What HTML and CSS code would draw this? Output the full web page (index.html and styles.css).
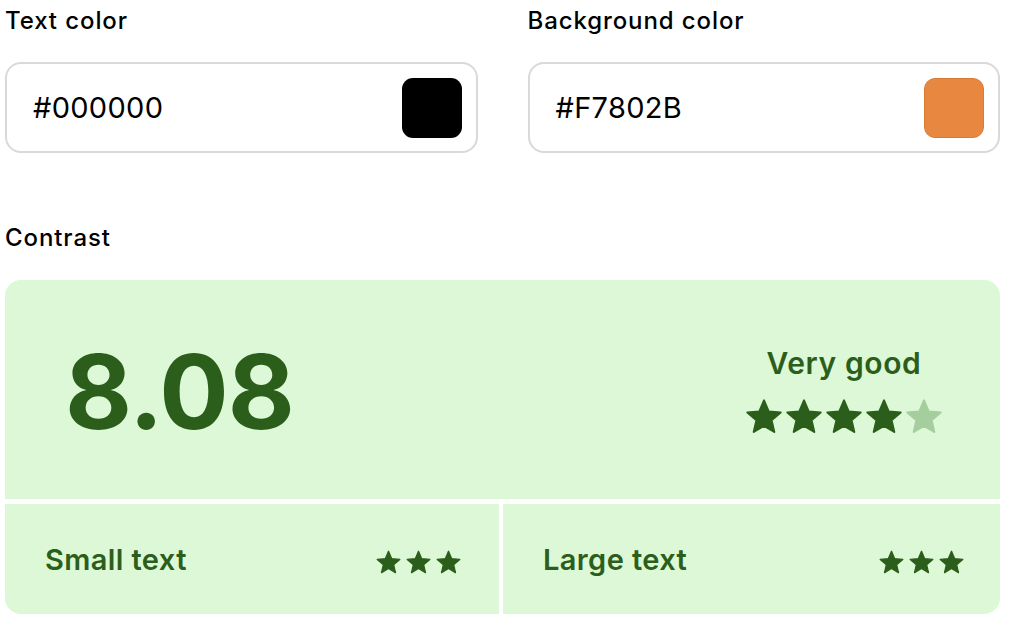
FILE: index.html
```html
<!DOCTYPE html>
<html>
<head>
<meta charset="utf-8">
<link rel="stylesheet" href="styles.css">
</head>
<body>
<svg width="0" height="0" class="defs">
  <defs>
    <symbol id="star" viewBox="0 0 24 24">
      <path d="M12 17.27L18.18 21l-1.64-7.03L22 9.24l-7.19-.61L12 2 9.19 8.63 2 9.24l5.46 4.73L5.82 21z" stroke="currentColor" stroke-width="1.2" stroke-linejoin="round"/>
    </symbol>
  </defs>
</svg>
<div class="page">
  <div class="pickers">
    <div class="field">
      <div class="label">Text color</div>
      <div class="input">
        <span class="value">#000000</span>
        <span class="swatch swatch-black"></span>
      </div>
    </div>
    <div class="field">
      <div class="label">Background color</div>
      <div class="input">
        <span class="value">#F7802B</span>
        <span class="swatch swatch-orange"></span>
      </div>
    </div>
  </div>

  <div class="label contrast-label">Contrast</div>
  <div class="card">
    <div class="top">
      <div class="ratio">8.08</div>
      <div class="rating">
        <div class="rating-text">Very good</div>
        <div class="stars big">
          <svg><use href="#star"/></svg>
          <svg><use href="#star"/></svg>
          <svg><use href="#star"/></svg>
          <svg><use href="#star"/></svg>
          <svg class="dim"><use href="#star"/></svg>
        </div>
      </div>
    </div>
    <div class="bottom">
      <div class="cell">
        <span class="cell-text">Small text</span>
        <div class="stars small">
          <svg><use href="#star"/></svg>
          <svg><use href="#star"/></svg>
          <svg><use href="#star"/></svg>
        </div>
      </div>
      <div class="cell">
        <span class="cell-text">Large text</span>
        <div class="stars small">
          <svg><use href="#star"/></svg>
          <svg><use href="#star"/></svg>
          <svg><use href="#star"/></svg>
        </div>
      </div>
    </div>
  </div>
</div>
</body>
</html>
```

FILE: styles.css
```css
html, body {
  margin: 0;
  padding: 0;
  background: #ffffff;
}
body {
  font-family: Inter, "Noto Sans", sans-serif;
  color: #000;
}
.defs {
  position: absolute;
  width: 0;
  height: 0;
}
.page {
  padding: 4px 10px 0 5px;
}
.pickers {
  display: grid;
  grid-template-columns: 1fr 1fr;
  column-gap: 50px;
}
.label {
  font-size: 24px;
  font-weight: 500;
  letter-spacing: 0.9px;
  line-height: 34px;
  height: 34px;
}
.input {
  margin-top: 24px;
  height: 87px;
  border: 2px solid #d9d9d9;
  border-radius: 16px;
  display: flex;
  align-items: center;
  justify-content: space-between;
  padding: 0 14px 0 26px;
}
.value {
  font-size: 29px;
  font-weight: 400;
  letter-spacing: 0.3px;
}
.swatch {
  width: 60px;
  height: 60px;
  border-radius: 11px;
  box-sizing: border-box;
}
.swatch-black {
  background: #000;
}
.swatch-orange {
  background: #e8873f;
  border: 1px solid #d97c38;
}
.contrast-label {
  margin-top: 68px;
}
.card {
  margin-top: 25px;
  display: flex;
  flex-direction: column;
  gap: 5px;
  color: #2c5e1b;
}
.top {
  height: 219px;
  background: #dcf8d6;
  border-radius: 16px 16px 0 0;
  display: flex;
  align-items: center;
  justify-content: space-between;
  padding: 0 56px 0 60px;
}
.ratio {
  font-size: 103px;
  font-weight: 700;
  letter-spacing: -1px;
  line-height: 1;
  margin-top: 4px;
}
.rating {
  display: flex;
  flex-direction: column;
  align-items: center;
  gap: 16px;
  margin-top: 2px;
}
.rating-text {
  font-size: 30px;
  font-weight: 600;
  letter-spacing: 0.6px;
  line-height: 36px;
}
.stars {
  display: flex;
}
.stars svg {
  fill: #2c5e1b;
  color: #2c5e1b;
}
.stars.big svg {
  width: 40px;
  height: 40px;
}
.stars .dim {
  fill: #a6cd9d;
  color: #a6cd9d;
}
.stars.small {
  gap: 3px;
  margin-top: 7px;
}
.stars.small svg {
  width: 27px;
  height: 27px;
}
.bottom {
  display: grid;
  grid-template-columns: 494px 1fr;
  column-gap: 4px;
  height: 110px;
}
.cell {
  background: #dcf8d6;
  display: flex;
  align-items: center;
  justify-content: space-between;
  padding: 0 37px 0 40px;
}
.cell:first-child {
  border-radius: 0 0 0 16px;
}
.cell:last-child {
  border-radius: 0 0 16px 0;
  padding-right: 35px;
}
.cell-text {
  font-size: 29px;
  font-weight: 600;
  letter-spacing: 0.4px;
}
```
